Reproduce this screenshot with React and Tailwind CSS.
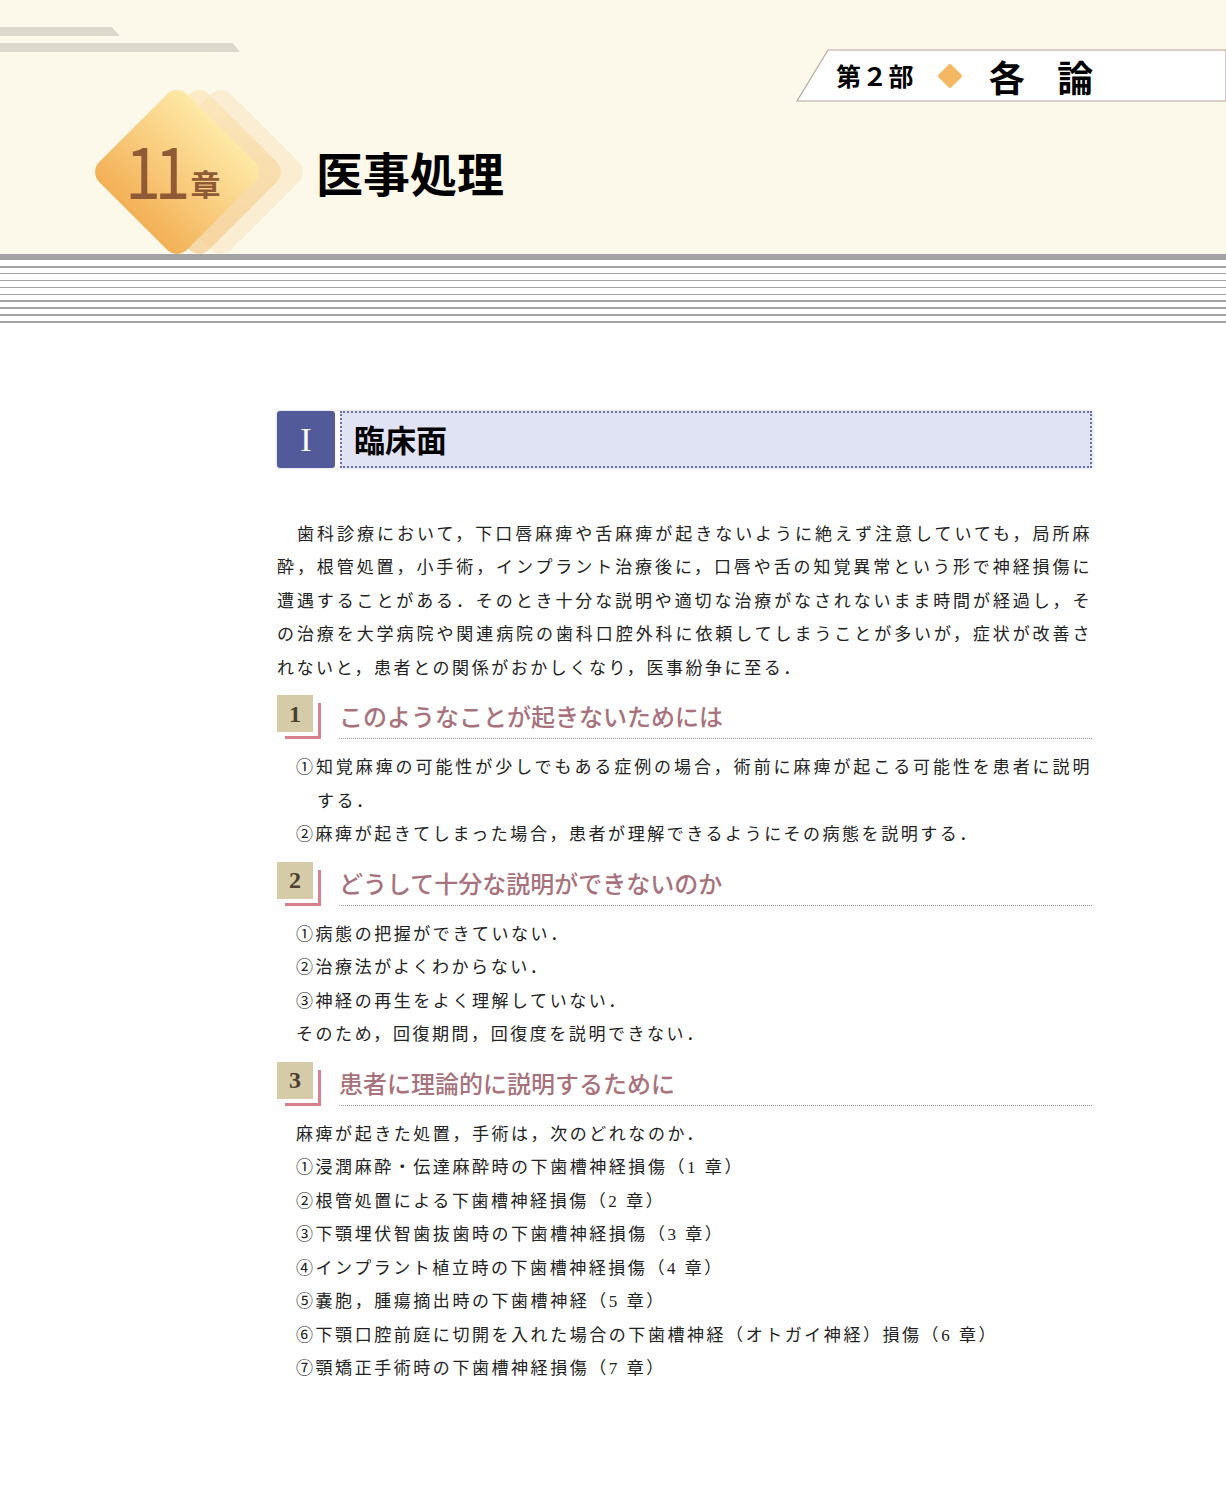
const serif = { fontFamily: '"Liberation Serif","Noto Sans CJK JP",serif' };
const sans = { fontFamily: '"Noto Sans CJK JP",sans-serif' };

function Diamond({ className }) {
  return (
    <div className={"absolute w-[124px] h-[124px] rotate-45 rounded-[14px] " + className} />
  );
}

function SubHead({ n, title }) {
  return (
    <div className="flex items-end mt-[10px] mb-[12px]">
      <div className="relative w-[44px] h-[44px] shrink-0">
        <div className="absolute left-[8px] top-[8px] w-[36px] h-[36px] border-r-[3px] border-b-[3px] border-[#d9808f]" />
        <div className="absolute left-0 top-0 w-[36px] h-[37px] bg-[#d6cba8] flex items-center justify-center text-[24px] font-bold text-[#4a4030]" style={serif}>{n}</div>
      </div>
      <div className="ml-[18px] flex-1 border-b border-dotted border-[#999] pb-[4px] text-[24px] font-medium text-[#a8727c] leading-[36px]" style={sans}>{title}</div>
    </div>
  );
}

const P = ({ children, cls = "" }) => (
  <p className={"text-[17px] leading-[33.5px] text-[#222] tracking-[0.15em] " + cls} style={serif}>{children}</p>
);

export default function App() {
  return (
    <div className="w-[1226px] min-h-[1500px] bg-white relative overflow-hidden">
      <div className="relative h-[254px] bg-[#fdf9ea]">
        <div className="absolute left-0 top-[27px] w-[120px] h-[9px] bg-[#dcd9cc] [clip-path:polygon(0_0,93%_0,100%_100%,0_100%)]" />
        <div className="absolute left-0 top-[43px] w-[240px] h-[9px] bg-[#dcd9cc] [clip-path:polygon(0_0,97%_0,100%_100%,0_100%)]" />
        <div className="absolute left-[796px] top-[49px] w-[430px] h-[53px]">
          <svg className="absolute inset-0" width="430" height="53"><polygon points="32,1 430,1 430,52 1,52" fill="#fff" stroke="#b8a49a" strokeWidth="1.2" /></svg>
          <div className="absolute left-[40px] top-0 h-full flex items-center font-bold text-black" style={sans}>
            <span className="text-[25px] tracking-[0.05em]">第２部</span>
            <span className="ml-[26px] w-[18px] h-[18px] rotate-45 bg-[#f5b862] rounded-[2px]" />
            <span className="ml-[30px] text-[36px] tracking-[0.9em]">各論</span>
          </div>
        </div>
        <Diamond className="left-[159px] top-[110px] bg-[#f7dcae] opacity-40" />
        <Diamond className="left-[137px] top-[110px] bg-gradient-to-br from-[#fbe4b0] to-[#f2c27a] opacity-60" />
        <Diamond className="left-[115px] top-[110px] bg-gradient-to-b from-[#fde9a6] to-[#f2b055]" />
        <div className="absolute left-[125px] top-[128px] flex items-end text-[#8f5a35]" style={sans}>
          <span className="text-[72px] font-normal leading-[80px] tracking-[-0.1em] scale-x-90 origin-left">11</span>
          <span className="text-[30px] font-bold leading-[50px] ml-[0px]">章</span>
        </div>
        <div className="absolute left-[316px] top-[142px] text-[47px] font-bold text-black leading-[60px]" style={sans}>医事処理</div>
      </div>
      <div className="h-[6px] bg-[#a3a3a3]" />
      <div className="flex flex-col pt-[6px] gap-[5.4px]">
        {[0,1,2,3,4,5,6,7,8].map(i => <div key={i} className="h-[1.5px] bg-[#a3a3a3]" />)}
      </div>

      <div className="ml-[277px] w-[815px] mt-[88px]">
        <div className="flex h-[57px] shadow-[0_0_3px_rgba(80,80,140,0.3)]">
          <div className="w-[58px] bg-[#535a99] rounded-[3px] flex items-center justify-center text-white text-[34px]" style={serif}>I</div>
          <div className="flex-1 ml-[5px] bg-[#dfe3f3] border-2 border-dotted border-[#6a6fa8] flex items-center pl-[12px]">
            <span className="text-[31px] font-bold text-black" style={sans}>臨床面</span>
          </div>
        </div>

        <div className="mt-[50px]">
          <P cls="text-justify indent-[20px]">歯科診療において，下口唇麻痺や舌麻痺が起きないように絶えず注意していても，局所麻酔，根管処置，小手術，インプラント治療後に，口唇や舌の知覚異常という形で神経損傷に遭遇することがある．そのとき十分な説明や適切な治療がなされないまま時間が経過し，その治療を大学病院や関連病院の歯科口腔外科に依頼してしまうことが多いが，症状が改善されないと，患者との関係がおかしくなり，医事紛争に至る．</P>
        </div>

        <SubHead n="1" title="このようなことが起きないためには" />
        <div className="pl-[19px]">
          <P cls="pl-[21px] -indent-[21px] text-justify">①知覚麻痺の可能性が少しでもある症例の場合，術前に麻痺が起こる可能性を患者に説明する．</P>
          <P>②麻痺が起きてしまった場合，患者が理解できるようにその病態を説明する．</P>
        </div>

        <SubHead n="2" title="どうして十分な説明ができないのか" />
        <div className="pl-[19px]">
          <P>①病態の把握ができていない．</P>
          <P>②治療法がよくわからない．</P>
          <P>③神経の再生をよく理解していない．</P>
          <P>そのため，回復期間，回復度を説明できない．</P>
        </div>

        <SubHead n="3" title="患者に理論的に説明するために" />
        <div className="pl-[19px]">
          <P>麻痺が起きた処置，手術は，次のどれなのか．</P>
          <P>①浸潤麻酔・伝達麻酔時の下歯槽神経損傷（1 章）</P>
          <P>②根管処置による下歯槽神経損傷（2 章）</P>
          <P>③下顎埋伏智歯抜歯時の下歯槽神経損傷（3 章）</P>
          <P>④インプラント植立時の下歯槽神経損傷（4 章）</P>
          <P>⑤嚢胞，腫瘍摘出時の下歯槽神経（5 章）</P>
          <P>⑥下顎口腔前庭に切開を入れた場合の下歯槽神経（オトガイ神経）損傷（6 章）</P>
          <P>⑦顎矯正手術時の下歯槽神経損傷（7 章）</P>
        </div>
      </div>
    </div>
  );
}
